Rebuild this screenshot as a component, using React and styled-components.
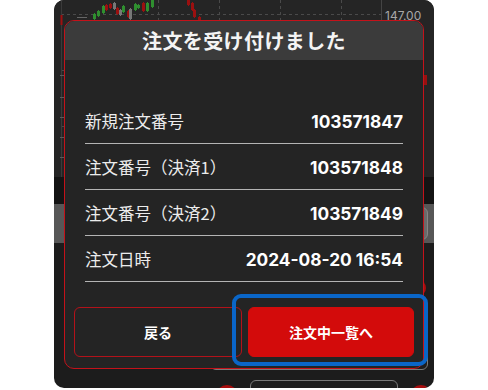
import React from "react";
import styled, { createGlobalStyle } from "styled-components";

const Global = createGlobalStyle`
  html, body { margin: 0; padding: 0; background: #ffffff; }
  * { box-sizing: border-box; }
`;

const JP = `"Noto Sans CJK JP", "Noto Sans", sans-serif`;
const NUM = `"Inter", "Noto Sans CJK JP", sans-serif`;

const Stage = styled.div`
  width: 488px;
  height: 390px;
  display: flex;
  justify-content: center;
  overflow: hidden;
`;

const Phone = styled.div`
  position: relative;
  width: 380px;
  height: 388px;
  border-radius: 10px;
  background: #1c1c1c;
  overflow: hidden;
  display: flex;
  flex-direction: column;
`;

const ChartArea = styled.div`
  height: 177px;
  background: #252525;
  flex: none;
`;

const DarkBand = styled.div`
  height: 27px;
  background: #141414;
  flex: none;
`;

const GrayBand = styled.div`
  height: 39px;
  background: #575757;
  flex: none;
  display: flex;
  justify-content: flex-end;
  align-items: center;
  padding-right: 6px;
`;

const GhostChip = styled.div`
  width: 60px;
  height: 33px;
  border-radius: 6px;
  background: #6a6a6a;
  border: 1px solid #858585;
`;

const Lower = styled.div`
  flex: 1;
  display: flex;
  flex-direction: column;
`;

const LowerRow = styled.div`
  display: flex;
  justify-content: ${(p) => p.$justify || "flex-end"};
  align-items: ${(p) => p.$align || "center"};
  height: ${(p) => p.$h}px;
  padding: ${(p) => p.$pt || 0}px ${(p) => p.$pr || 0}px 0 ${(p) => p.$pl || 0}px;
  gap: ${(p) => p.$gap || 0}px;
  flex: none;
`;

const Dot = styled.div`
  width: ${(p) => p.$size}px;
  height: ${(p) => p.$size}px;
  margin-top: ${(p) => p.$mt || 0}px;
  border-radius: 50%;
  background: #a80d0d;
  flex: none;
`;

const GhostButton = styled.div`
  width: ${(p) => p.$w}px;
  height: ${(p) => p.$hh}px;
  border: 1px solid #7a7a7a;
  border-radius: 6px;
  background: #1e1e1e;
  flex: none;
`;

const Dialog = styled.div`
  position: absolute;
  left: 10px;
  top: 20px;
  width: 360px;
  height: 349px;
  border: 1px solid #c4121a;
  border-radius: 10px;
  background: #242424;
  display: flex;
  flex-direction: column;
`;

const Header = styled.div`
  height: 39px;
  background: #3b3b3b;
  border-radius: 9px 9px 0 0;
  display: flex;
  align-items: center;
  justify-content: center;
  color: #f4f4f4;
  font-family: ${JP};
  font-weight: 700;
  font-size: 20px;
  letter-spacing: 0.4px;
`;

const Body = styled.div`
  padding: 38px 20px 0 20px;
  display: flex;
  flex-direction: column;
`;

const Row = styled.div`
  height: 46px;
  display: flex;
  align-items: center;
  justify-content: space-between;
  border-bottom: 1.5px solid #b4b4b4;
  padding-top: 1px;
`;

const Label = styled.span`
  font-family: ${JP};
  font-size: 16.5px;
  font-weight: 400;
  color: #ececec;
`;

const Value = styled.span`
  font-family: ${NUM};
  font-size: 17.3px;
  font-weight: 700;
  color: #ffffff;
`;

const Footer = styled.div`
  margin-top: 25px;
  padding: 0 9px;
  display: flex;
  gap: 6px;
`;

const Button = styled.button`
  flex: 1;
  height: 50px;
  border-radius: 6px;
  font-family: ${JP};
  font-size: 14px;
  font-weight: 700;
  color: #ffffff;
  border: 1px solid ${(p) => (p.$primary ? "#d30b0b" : "#b3121a")};
  background: ${(p) => (p.$primary ? "#d30b0b" : "transparent")};
  padding: 0;
  cursor: pointer;
`;

const HighlightWrap = styled.div`
  position: relative;
  flex: 1;
  display: flex;
`;

const Highlight = styled.div`
  position: absolute;
  left: -16px;
  top: -13px;
  right: -14px;
  bottom: -9px;
  border: 4px solid #0a66c8;
  border-radius: 9px;
  pointer-events: none;
`;

const candles = [
  [39, 14, 19, "#2f8f2f"],
  [43, 11, 16, "#2f8f2f"],
  [48, 6, 13, "#2f8f2f"],
  [51, 5, 10, "#9a1010"],
  [55, 4, 8, "#9a1010"],
  [59, 3, 9, "#777"],
  [62, 8, 14, "#9a1010"],
  [65, 10, 15, "#777"],
  [68, 6, 12, "#2f8f2f"],
  [73, 11, 17, "#9a1010"],
  [75, 9, 19, "#777"],
  [80, 4, 10, "#2f8f2f"],
  [83, 5, 8, "#2f8f2f"],
  [88, 3, 11, "#9a1010"],
  [92, 3, 11, "#2f8f2f"],
  [97, 0, 7, "#2f8f2f"],
  [133, 0, 5, "#9a1010"],
  [137, 3, 10, "#9a1010"],
  [139, 10, 17, "#9a1010"],
  [144, 17, 20, "#9a1010"],
];

function Chart() {
  return (
    <svg width="380" height="177" viewBox="0 0 380 177">
      <g stroke="#4a4a4a" strokeWidth="1" strokeDasharray="3 3">
        <line x1="7" y1="14.5" x2="327" y2="14.5" />
        <line x1="7" y1="70.5" x2="327" y2="70.5" />
        <line x1="7" y1="126.5" x2="327" y2="126.5" />
        {[104, 165, 226, 287].map((x) => (
          <line key={x} x1={x + 0.5} y1="0" x2={x + 0.5} y2="177" />
        ))}
      </g>
      <line x1="327.5" y1="0" x2="327.5" y2="177" stroke="#444" />
      <line x1="7.5" y1="0" x2="7.5" y2="177" stroke="#3a3a3a" />
      {[75, 97, 117, 137, 157].map((y) => (
        <line key={y} x1="6" y1={y + 0.5} x2="10" y2={y + 0.5} stroke="#5a5a5a" />
      ))}
      <line x1="7.5" y1="15" x2="7.5" y2="25" stroke="#a01010" strokeWidth="2" />
      <line x1="23" y1="17.5" x2="33" y2="17.5" stroke="#666" />
      {candles.map(([x, t, b, c], i) => (
        <g key={i}>
          <line x1={x + 1.5} y1={t - 1} x2={x + 1.5} y2={b + 1} stroke={c} />
          <rect x={x} y={t} width="3" height={b - t} fill={c} />
        </g>
      ))}
      <rect x="370" y="75" width="3" height="10" fill="#9a1010" />
      <text x="331" y="19.5" fill="#a8a8a8" fontSize="12" fontFamily="Inter, sans-serif">
        147.00
      </text>
    </svg>
  );
}

const rows = [
  ["新規注文番号", "103571847"],
  ["注文番号（決済1）", "103571848"],
  ["注文番号（決済2）", "103571849"],
  ["注文日時", "2024-08-20 16:54"],
];

export default function App() {
  return (
    <>
      <Global />
      <Stage>
        <Phone>
          <ChartArea>
            <Chart />
          </ChartArea>
          <DarkBand />
          <GrayBand>
            <GhostChip />
          </GrayBand>
          <Lower>
            <LowerRow $h={90} $pr={8}>
              <Dot $size={16} />
            </LowerRow>
            <LowerRow $h={47} $align="flex-start" $pr={6}>
              <GhostButton $w={218} $hh={37} />
            </LowerRow>
            <LowerRow $h={20} $align="flex-start" $justify="flex-start" $pl={162} $gap={12}>
              <Dot $size={22} $mt={5} />
              <GhostButton $w={148} $hh={30} />
              <Dot $size={22} $mt={5} />
            </LowerRow>
          </Lower>

          <Dialog>
            <Header>注文を受け付けました</Header>
            <Body>
              {rows.map(([l, v]) => (
                <Row key={l}>
                  <Label>{l}</Label>
                  <Value>{v}</Value>
                </Row>
              ))}
            </Body>
            <Footer>
              <Button>戻る</Button>
              <HighlightWrap>
                <Button $primary>注文中一覧へ</Button>
                <Highlight />
              </HighlightWrap>
            </Footer>
          </Dialog>
        </Phone>
      </Stage>
    </>
  );
}
